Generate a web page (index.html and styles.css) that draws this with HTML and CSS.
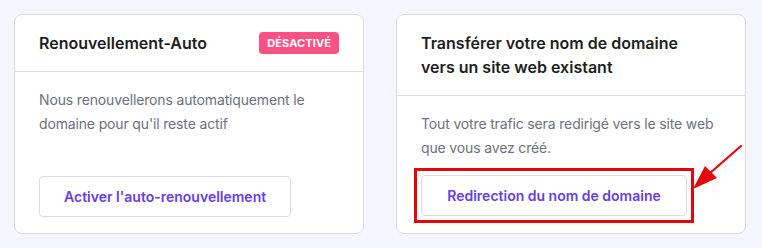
FILE: index.html
```html
<!DOCTYPE html>
<html lang="fr">
<head>
<meta charset="utf-8">
<link rel="stylesheet" href="styles.css">
</head>
<body>
<div class="page">
  <section class="card">
    <header class="card-head">
      <h2 class="card-title">Renouvellement-Auto</h2>
      <span class="badge">Désactivé</span>
    </header>
    <div class="card-body">
      <p class="card-text">Nous renouvellerons automatiquement le domaine pour qu'il reste actif</p>
      <button class="btn">Activer l'auto-renouvellement</button>
    </div>
  </section>
  <section class="card">
    <header class="card-head">
      <h2 class="card-title">Transférer votre nom de domaine vers un site web existant</h2>
    </header>
    <div class="card-body">
      <p class="card-text">Tout votre trafic sera redirigé vers le site web que vous avez créé.</p>
      <div class="highlight">
        <button class="btn">Redirection du nom de domaine</button>
      </div>
    </div>
  </section>
  <svg class="arrow" width="762" height="248" viewBox="0 0 762 248">
    <line x1="741" y1="146" x2="702" y2="180" stroke="#e5060b" stroke-width="2.2" stroke-linecap="round"/>
    <polygon points="693,189 705,166 717,178" fill="#e5060b"/>
  </svg>
</div>
</body>
</html>
```
FILE: styles.css
```css
* { box-sizing: border-box; }
html, body { margin: 0; padding: 0; }
body {
  background: #f4f5ff;
  font-family: "Inter", "DejaVu Sans", sans-serif;
  width: 762px;
  height: 248px;
  overflow: hidden;
}
.page {
  position: relative;
  display: flex;
  gap: 32px;
  padding: 14px 16px 14px 14px;
  height: 248px;
}
.card {
  width: 350px;
  background: #fff;
  border: 1px solid #dadce0;
  border-radius: 8px;
  display: flex;
  flex-direction: column;
}
.card-head {
  display: flex;
  align-items: center;
  justify-content: space-between;
  padding: 16px 24px;
  border-bottom: 1px solid #dadce0;
}
.card-title {
  margin: 0;
  font-size: 16px;
  line-height: 24px;
  font-weight: 600;
  color: #1d1e20;
  max-width: 290px;
}
.badge {
  background: #fc5185;
  color: #fff;
  font-size: 11px;
  font-weight: 700;
  text-transform: uppercase;
  line-height: 22px;
  height: 22px;
  padding: 0 8px;
  border-radius: 4px;
  letter-spacing: 0.1px;
}
.card-body {
  flex: 1;
  display: flex;
  flex-direction: column;
  align-items: flex-start;
  padding: 16px 24px 16px 24px;
}
.card-text {
  margin: 0;
  font-size: 14px;
  line-height: 24px;
  color: #6d7081;
  letter-spacing: -0.15px;
}
.btn {
  margin-top: auto;
  height: 41px;
  padding: 0 24px;
  background: #fff;
  border: 1px solid #dadce0;
  border-radius: 4px;
  font-family: inherit;
  font-size: 14px;
  font-weight: 600;
  color: #673de6;
}
.highlight {
  margin-top: auto;
  margin-left: -7px;
  margin-bottom: -6px;
  padding: 4px;
  border: 3px solid #e5060b;
}
.highlight .btn { width: 266px; display: block; }
.arrow {
  position: absolute;
  left: 0;
  top: 0;
  pointer-events: none;
}
```
